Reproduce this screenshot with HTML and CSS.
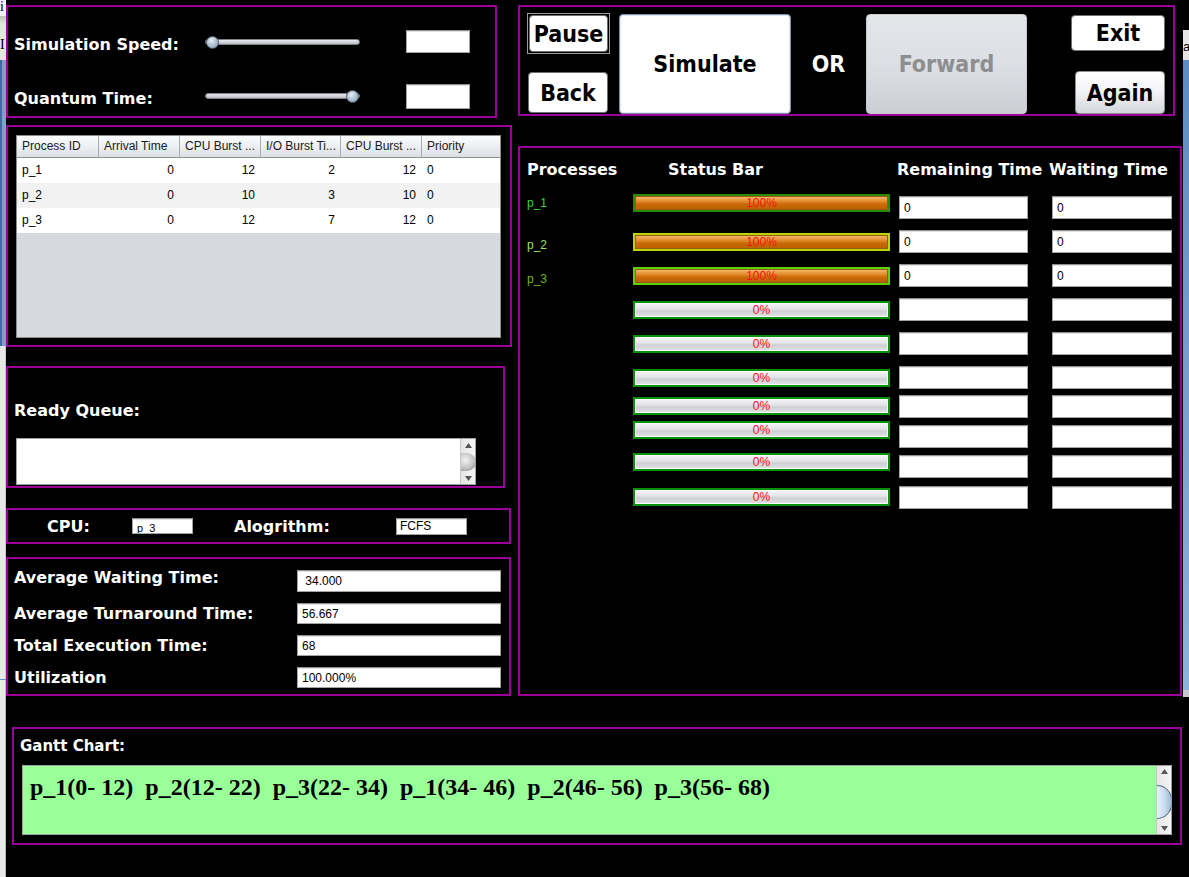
FILE: index.html
```html
<!DOCTYPE html>
<html>
<head>
<meta charset="utf-8">
<title>CPU Scheduling Simulator</title>
<link rel="stylesheet" href="styles.css">
</head>
<body>
<div class="screen">
  <div class="edge edge-left">
    <div class="seg l1"><span>i</span></div>
    <div class="seg l2"></div>
    <div class="seg l3"><span>I</span></div>
    <div class="seg l4"></div>
    <div class="seg l5"></div>
    <div class="seg l6"></div>
    <div class="seg l7"></div>
  </div>

  <div class="window">
    <div class="top">
      <div class="col-left">
        <section class="panel p-speed">
          <div class="srow">
            <span class="lbl slbl">Simulation Speed:</span>
            <div class="slider"><div class="track"><div class="thumb"></div></div></div>
            <div class="field f-speed"></div>
          </div>
          <div class="srow">
            <span class="lbl slbl">Quantum Time:</span>
            <div class="slider"><div class="track track-max"><div class="thumb"></div></div></div>
            <div class="field f-speed f-speed2"></div>
          </div>
        </section>

        <section class="panel p-table">
          <table class="ptable">
            <thead>
              <tr><th>Process ID</th><th>Arrival Time</th><th>CPU Burst ...</th><th>I/O Burst Ti...</th><th>CPU Burst ...</th><th>Priority</th></tr>
            </thead>
            <tbody>
              <tr><td>p_1</td><td class="num">0</td><td class="num">12</td><td class="num">2</td><td class="num">12</td><td>0</td></tr>
              <tr class="alt"><td>p_2</td><td class="num">0</td><td class="num">10</td><td class="num">3</td><td class="num">10</td><td>0</td></tr>
              <tr><td>p_3</td><td class="num">0</td><td class="num">12</td><td class="num">7</td><td class="num">12</td><td>0</td></tr>
            </tbody>
          </table>
        </section>

        <section class="panel p-queue">
          <div class="lbl qlbl">Ready Queue:</div>
          <div class="textarea queue-area">
            <div class="ta-body"></div>
            <div class="vscroll">
              <svg class="arr" width="9" height="7" viewBox="0 0 9 7"><path d="M4.5 1 L8 6 L1 6 Z" fill="#555"/></svg>
              <div class="vthumb grey"></div>
              <svg class="arr" width="9" height="7" viewBox="0 0 9 7"><path d="M1 1 L8 1 L4.5 6 Z" fill="#555"/></svg>
            </div>
          </div>
        </section>

        <section class="panel p-cpu">
          <span class="lbl cpu-lbl">CPU:</span>
          <div class="field f-cpu">p_3</div>
          <span class="lbl alg-lbl">Alogrithm:</span>
          <div class="field f-alg">FCFS</div>
        </section>

        <section class="panel p-stats">
          <span class="lbl st-lbl st1">Average Waiting Time:</span>
          <div class="field f-stat">&nbsp;34.000</div>
          <span class="lbl st-lbl">Average Turnaround Time:</span>
          <div class="field f-stat">56.667</div>
          <span class="lbl st-lbl">Total Execution Time:</span>
          <div class="field f-stat">68</div>
          <span class="lbl st-lbl">Utilization</span>
          <div class="field f-stat">100.000%</div>
        </section>
      </div>

      <div class="col-right">
        <section class="panel p-buttons">
          <div class="bcol">
            <div class="focus-ring"><div class="btn btn-pause">Pause</div></div>
            <div class="btn btn-back">Back</div>
          </div>
          <div class="btn btn-sim">Simulate</div>
          <div class="or">OR</div>
          <div class="btn btn-fwd">Forward</div>
          <div class="bcol bcol-right">
            <div class="btn btn-exit">Exit</div>
            <div class="btn btn-again">Again</div>
          </div>
        </section>

        <section class="panel p-procs">
          <div class="phead">
            <span class="lbl h1">Processes</span>
            <span class="lbl h2">Status Bar</span>
            <span class="lbl h3">Remaining Time</span>
            <span class="lbl h4">Waiting Time</span>
          </div>
          <div class="pbody">
            <div class="names">
              <div class="pname n1">p_1</div>
              <div class="pname n2">p_2</div>
              <div class="pname n3">p_3</div>
            </div>
            <div class="bars">
              <div class="pbar b1"><div class="pin full">100%</div></div>
              <div class="pbar b2"><div class="pin full">100%</div></div>
              <div class="pbar b3"><div class="pin full">100%</div></div>
              <div class="pbar"><div class="pin empty">0%</div></div>
              <div class="pbar"><div class="pin empty">0%</div></div>
              <div class="pbar"><div class="pin empty">0%</div></div>
              <div class="pbar"><div class="pin empty">0%</div></div>
              <div class="pbar"><div class="pin empty">0%</div></div>
              <div class="pbar"><div class="pin empty">0%</div></div>
              <div class="pbar"><div class="pin empty">0%</div></div>
            </div>
            <div class="boxes rem">
              <div class="field f-p">0</div>
              <div class="field f-p">0</div>
              <div class="field f-p">0</div>
              <div class="field f-p"></div>
              <div class="field f-p"></div>
              <div class="field f-p"></div>
              <div class="field f-p"></div>
              <div class="field f-p"></div>
              <div class="field f-p"></div>
              <div class="field f-p"></div>
            </div>
            <div class="boxes wait">
              <div class="field f-p">0</div>
              <div class="field f-p">0</div>
              <div class="field f-p">0</div>
              <div class="field f-p"></div>
              <div class="field f-p"></div>
              <div class="field f-p"></div>
              <div class="field f-p"></div>
              <div class="field f-p"></div>
              <div class="field f-p"></div>
              <div class="field f-p"></div>
            </div>
          </div>
        </section>
      </div>
    </div>

    <section class="panel p-gantt">
      <div class="lbl glbl">Gantt Chart:</div>
      <div class="textarea gantt-area">
        <div class="ta-body gantt-text">p_1(0- 12)  p_2(12- 22)  p_3(22- 34)  p_1(34- 46)  p_2(46- 56)  p_3(56- 68)</div>
        <div class="vscroll">
          <svg class="arr" width="9" height="7" viewBox="0 0 9 7"><path d="M4.5 1 L8 6 L1 6 Z" fill="#555"/></svg>
          <div class="vthumb blue"></div>
          <svg class="arr" width="9" height="7" viewBox="0 0 9 7"><path d="M1 1 L8 1 L4.5 6 Z" fill="#555"/></svg>
        </div>
      </div>
    </section>
  </div>

  <div class="edge edge-right">
    <div class="seg r1"></div>
    <div class="seg r2"><span>a</span></div>
    <div class="seg r3"></div>
    <div class="seg r4"></div>
    <div class="seg r5"></div>
  </div>
</div>
</body>
</html>
```

FILE: styles.css
```css
* { box-sizing: border-box; }
html, body { margin: 0; padding: 0; background: #000; }
body { font-family: "DejaVu Sans", "Liberation Sans", sans-serif; }

.screen {
  width: 1189px;
  height: 877px;
  display: flex;
  overflow: hidden;
  background: #000;
}

/* background window strips */
.edge { width: 6px; flex-shrink: 0; display: flex; flex-direction: column; overflow: hidden; }
.seg { flex-shrink: 0; overflow: hidden; font-family: "Liberation Serif", serif; font-size: 14px; line-height: 14px; color: #000; }
.l1 { height: 16px; background: #f2f2f2; }
.l2 { height: 8px; background: linear-gradient(#bfbfbf, #e6e6e6); }
.l3 { height: 36px; background: #e4e4e4; padding-top: 14px; }
.l4 { height: 286px; background: linear-gradient(90deg, #3f6aa3 0 2px, #7ea0c8 2px); }
.l5 { height: 333px; background: #e7e7e7; border-right: 1px solid #c9c9c9; }
.l6 { height: 1px; background: #6d8fbb; }
.l7 { flex: 1; background: #e9e9e9; border-right: 1px solid #bcbcbc; }
.r1 { height: 30px; background: #000; }
.r2 { height: 30px; background: #e6e6e6; padding-top: 10px; font-family: "Liberation Sans", sans-serif; font-size: 13px; }
.r3 { height: 630px; background: linear-gradient(#5d8bc2, #8db2dc); }
.r4 { height: 7px; background: #c6c9cf; }
.r5 { flex: 1; background: #000; }

.window { width: 1177px; display: flex; flex-direction: column; }
.top { display: flex; gap: 6px; padding-top: 5px; }
.col-left { width: 506px; display: flex; flex-direction: column; align-items: flex-start; flex-shrink: 0; }
.col-right { width: 664px; display: flex; flex-direction: column; align-items: flex-start; flex-shrink: 0; }

.panel { border: 2px solid #990099; flex-shrink: 0; }

.lbl {
  color: #fff;
  font-family: "DejaVu Sans", sans-serif;
  font-weight: bold;
  font-size: 16px;
  line-height: 19px;
  white-space: nowrap;
}

.field {
  background: #fff;
  border: 1px solid #a3a3a3;
  border-top-color: #8f8f8f;
  box-shadow: inset 0 1px 0 #e2e2e2;
  font-family: "Liberation Sans", sans-serif;
  font-size: 12px;
  color: #000;
  white-space: nowrap;
  overflow: hidden;
}

/* speed panel */
.p-speed { width: 491px; height: 113px; padding: 22px 0 0 6px; }
.srow { display: flex; align-items: center; height: 26px; }
.srow + .srow { margin-top: 28px; }
.slbl { width: 191px; padding-top: 5px; }
.slider { width: 155px; height: 26px; display: flex; align-items: center; }
.track {
  width: 155px; height: 6px;
  border-radius: 3px;
  border: 1px solid #7c7f85;
  background: linear-gradient(#e9ebee, #b9bcc2);
  display: flex; align-items: center;
}
.thumb {
  width: 13px; height: 13px;
  border-radius: 50%;
  border: 1px solid #4f5c6a;
  background: radial-gradient(circle at 40% 35%, #e8f0f8 0, #a9bccf 55%, #7f93a8 100%);
  flex-shrink: 0;
}
.track-max { justify-content: flex-end; }
.f-speed { width: 64px; height: 23px; margin-left: 46px; margin-top: -1px; }
.f-speed2 { height: 25px; margin-top: 0; }

/* table panel */
.p-table { width: 506px; height: 222px; margin-top: 7px; padding: 8px 0 0 8px; }
.ptable {
  width: 485px; height: 203px;
  border-collapse: collapse;
  border: 1px solid #8c8c8c;
  background: #d6d9df;
  font-family: "Liberation Sans", sans-serif;
  font-size: 12px;
  color: #000;
  display: block;
}
.ptable thead, .ptable tbody { display: block; }
.ptable tr { display: grid; grid-template-columns: 82px 81px 81px 80px 81px 78px; }
.ptable th {
  display: block;
  height: 22px;
  line-height: 21px;
  font-weight: normal;
  text-align: left;
  padding: 0 0 0 5px;
  color: #1a1a1a;
  background: linear-gradient(#fbfcfd 0%, #eef0f3 45%, #dcdfe4 100%);
  border-right: 1px solid #a8abb0;
  border-bottom: 1px solid #8d9095;
  overflow: hidden;
  white-space: nowrap;
}
.ptable th:last-child { border-right: none; }
.ptable td {
  display: block;
  height: 25px;
  line-height: 25px;
  padding: 0 0 0 5px;
  background: #fff;
  white-space: nowrap;
  overflow: hidden;
}
.ptable tr.alt td { background: #f2f2f2; }
.ptable td.num { text-align: right; padding: 0 6px 0 0; }

/* ready queue */
.p-queue { width: 499px; height: 122px; margin-top: 19px; padding: 33px 0 0 6px; }
.qlbl { display: block; }
.textarea {
  display: flex;
  background: #fff;
  border: 1px solid #a0a0a0;
  overflow: hidden;
}
.queue-area { width: 460px; height: 47px; margin: 18px 0 0 2px; }
.ta-body { flex: 1; }
.vscroll {
  width: 15px;
  flex-shrink: 0;
  background: linear-gradient(90deg, #e6e6e6, #f4f4f4);
  border-left: 1px solid #c8c8c8;
  display: flex;
  flex-direction: column;
  align-items: center;
  justify-content: space-between;
  padding: 3px 0 2px;
  overflow: hidden;
}
.arr { display: block; flex-shrink: 0; }
.vthumb { flex-shrink: 0; }
.vthumb.grey {
  width: 15px; height: 18px;
  border-radius: 0 9px 9px 0;
  background: radial-gradient(circle at 30% 40%, #f4f4f4 0, #c2c2c2 55%, #7c7c7c 100%);
}
.vthumb.blue {
  width: 15px; height: 34px;
  border: 1px solid #56687c;
  border-left: none;
  border-radius: 0 17px 17px 0;
  background: linear-gradient(90deg, #e8f1fa 0%, #c7dbef 55%, #9fbbd8 100%);
}

/* cpu */
.p-cpu { width: 505px; height: 36px; margin-top: 20px; display: flex; align-items: center; padding-left: 39px; }
.cpu-lbl { width: 85px; }
.f-cpu { width: 61px; height: 16px; line-height: 18px; font-size: 11px; padding-left: 4px; }
.alg-lbl { width: 162px; margin-left: 41px; }
.f-alg { width: 71px; height: 17px; line-height: 15px; padding-left: 3px; }

/* stats */
.p-stats {
  width: 505px; height: 139px;
  margin-top: 13px;
  padding: 11px 0 0 6px;
  display: grid;
  grid-template-columns: 283px 204px;
  grid-template-rows: 22px 21px 21px 21px;
  row-gap: 11px;
  align-items: center;
}
.st1 { margin-top: -7px; }
.f-stat { height: 100%; line-height: 21px; padding-left: 4px; }

/* buttons */
.p-buttons { width: 657px; height: 111px; display: flex; align-items: flex-start; padding: 6px 0 0 7px; }
.bcol { width: 83px; height: 100px; display: flex; flex-direction: column; justify-content: space-between; align-items: flex-start; flex-shrink: 0; }
.btn {
  display: flex; align-items: center; justify-content: center;
  background: #fff;
  border: 1px solid #6f6f6f;
  border-radius: 4px;
  font-family: "DejaVu Sans Condensed", "DejaVu Sans", sans-serif;
  font-stretch: condensed;
  font-weight: bold;
  font-size: 23px;
  color: #000;
  flex-shrink: 0;
  white-space: nowrap;
}
.focus-ring { width: 83px; height: 41px; border: 1px solid #9a9a9a; padding: 1px; }
.btn-pause { width: 100%; height: 100%; }
.btn-back { width: 80px; height: 41px; margin-left: 1px; }
.btn-sim {
  width: 172px; height: 100px; margin: 1px 0 0 9px;
  border-color: #7f93ad;
  box-shadow: inset 0 0 0 1px #dfe7f1;
}
.or {
  width: 75px; height: 100px; margin-top: 1px; flex-shrink: 0;
  display: flex; align-items: center; justify-content: center;
  color: #fff;
  font-family: "DejaVu Sans Condensed", "DejaVu Sans", sans-serif;
  font-stretch: condensed;
  font-weight: bold;
  font-size: 23px;
}
.btn-fwd {
  width: 161px; height: 100px; margin-top: 1px;
  background: linear-gradient(#e4e6ea 0%, #dcdfe4 50%, #cbcfd5 100%);
  border-color: #c5c8cd;
  color: #8e8e8e;
}
.bcol-right { width: 94px; height: 99px; margin: 2px 0 0 44px; align-items: flex-end; }
.btn-exit { width: 94px; height: 36px; }
.btn-again {
  width: 90px; height: 43px;
  background: linear-gradient(#ffffff 0%, #f1f2f4 50%, #d3d6db 100%);
  border-color: #8c8f94;
}

/* processes */
.p-procs { width: 664px; height: 550px; margin-top: 30px; padding: 12px 0 0 7px; }
.phead { display: flex; height: 19px; }
.h1 { width: 141px; }
.h2 { width: 229px; }
.h3 { width: 152px; }
.pbody { display: flex; margin-top: 15px; }
.names { width: 106px; display: flex; flex-direction: column; flex-shrink: 0; }
.pname { font-family: "Liberation Sans", sans-serif; font-size: 12px; line-height: 14px; height: 14px; }
.n1 { color: #33d433; margin-top: 2px; }
.n2 { color: #9ae266; margin-top: 28px; }
.n3 { color: #72b514; margin-top: 20px; }

.bars { width: 257px; display: flex; flex-direction: column; flex-shrink: 0; }
.pbar { width: 257px; height: 18px; border: 2px solid #0b900b; flex-shrink: 0; }
.pbar:nth-child(2) { margin-top: 21px; }
.pbar:nth-child(3), .pbar:nth-child(4), .pbar:nth-child(5), .pbar:nth-child(6) { margin-top: 16px; }
.pbar:nth-child(7) { margin-top: 10px; }
.pbar:nth-child(8) { margin-top: 6px; }
.pbar:nth-child(9) { margin-top: 14px; }
.pbar:nth-child(10) { margin-top: 17px; }
.pbar.b1 { border-color: #2b8a06; }
.pbar.b2 { border-color: #b8d600; }
.pbar.b3 { border-color: #5fcf00; }
.pin {
  height: 100%;
  display: flex; align-items: center; justify-content: center;
  font-family: "Liberation Sans", sans-serif;
  font-size: 12px;
  line-height: 12px;
  color: #ff1010;
}
.pin.empty {
  border: 1px solid #fbfbfb;
  background: linear-gradient(#f2f2f3 0%, #e4e5e7 40%, #cfd0d4 60%, #dedfe2 100%);
}
.pin.full {
  border: 1px solid #9a5a14;
  background: linear-gradient(#f3b56a 0%, #e28d2d 35%, #c96a08 60%, #bd6100 100%);
  color: #f41414;
}

.boxes { display: flex; flex-direction: column; flex-shrink: 0; }
.rem { width: 129px; margin-left: 9px; }
.wait { width: 120px; margin-left: 24px; }
.f-p { height: 23px; line-height: 23px; padding-left: 4px; flex-shrink: 0; margin-top: 11px; }
.boxes .f-p:first-child { margin-top: 2px; }
.boxes .f-p:nth-child(7) { margin-top: 6px; }
.boxes .f-p:nth-child(8), .boxes .f-p:nth-child(9) { margin-top: 7px; }
.boxes .f-p:nth-child(10) { margin-top: 8px; }

/* gantt */
.p-gantt { width: 1170px; height: 118px; margin: 31px 0 0 6px; padding: 8px 0 0 6px; }
.glbl { font-size: 15px; }
.gantt-area { width: 1150px; height: 70px; margin: 9px 0 0 2px; background: #99ff99; }
.gantt-text {
  padding: 7px 0 0 7px;
  font-family: "Liberation Serif", "Times New Roman", serif;
  font-weight: bold;
  font-size: 24px;
  line-height: 28px;
  white-space: pre;
  color: #000;
}
.gantt-area .vscroll { padding: 2px 0 2px; justify-content: flex-start; }
.gantt-area .vthumb { margin-top: 10px; margin-bottom: auto; }
```
